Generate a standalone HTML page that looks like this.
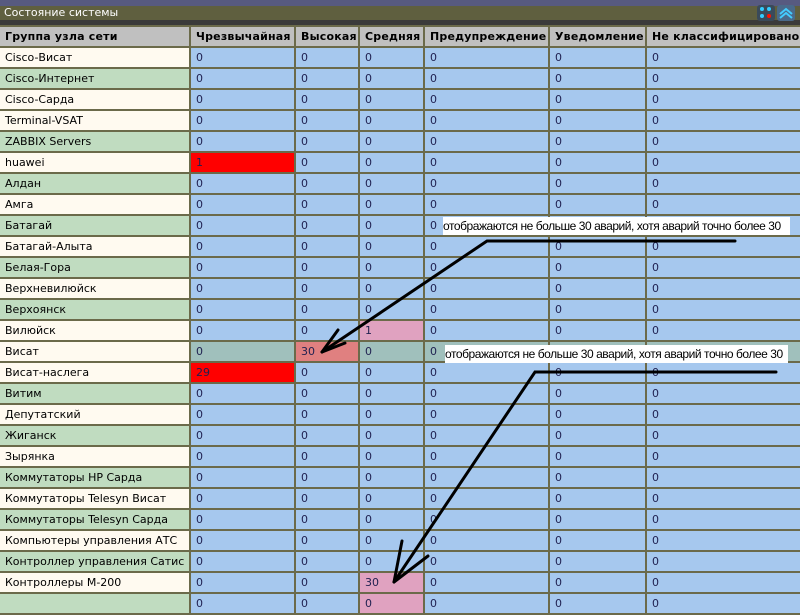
<!DOCTYPE html>
<html><head><meta charset="utf-8"><style>
*{margin:0;padding:0;box-sizing:border-box}
body{width:800px;height:600px;overflow:hidden;background:#fffaf0;font-family:"DejaVu Sans","Liberation Sans",sans-serif;font-size:11px;position:relative}
#top{position:absolute;left:0;top:0;width:800px;height:6px;background:#575a80}
#title{position:absolute;left:0;top:6px;width:800px;height:14px;background:#5f5f3f;color:#fff;font-size:11px;line-height:14px;padding-left:4px}
#strip{position:absolute;left:0;top:20px;width:800px;height:5px;background:#3a3a3a}
table{position:absolute;left:-2px;top:25px;border-collapse:collapse;table-layout:fixed;width:804px}
td,th{border:2px solid #6b6a4a;height:21px;padding:0 0 0 5px;text-align:left;white-space:nowrap;overflow:hidden}
th{background:#c0c0c0;font-weight:bold;color:#000;font-size:11px;letter-spacing:0.2px}
td{background:#a6c8ee;color:#1f2050}
td.l{color:#000}
td.c{background:#fffaf0}
td.g{background:#c0dcc0}
td.r{background:#ff0000}
td.p{background:#e0a2c0}
td.s{background:#a0c0bc}
td.h{background:#e08080}
.note{position:absolute;background:#fff;color:#000;font-family:"Liberation Sans",sans-serif;font-size:12px;line-height:18px;white-space:nowrap;overflow:hidden;letter-spacing:-0.45px}
.ic{position:absolute;top:5px;width:18px;height:16px;border-radius:3px;background:#3a4a5a}
</style></head><body>
<div id="top"></div>
<div id="title">Состояние системы</div>
<div id="strip"></div>
<div class="ic" style="left:757px"><div style="position:absolute;left:3px;top:2px;width:4px;height:4px;border-radius:2px;background:#3cf"></div><div style="position:absolute;left:10px;top:2px;width:4px;height:4px;border-radius:2px;background:#3cf"></div><div style="position:absolute;left:3px;top:9px;width:4px;height:4px;border-radius:2px;background:#3cf"></div><div style="position:absolute;left:10px;top:9px;width:4px;height:4px;border-radius:2px;background:#f10"></div></div>
<div class="ic" style="left:777px;background:#4a6a8a"><svg width="18" height="16"><path d="M3 9 L9 4 L15 9 M3 13 L9 8 L15 13" stroke="#4cf" stroke-width="2" fill="none"/></svg></div>
<table>
<colgroup><col style="width:191px"><col style="width:105px"><col style="width:64px"><col style="width:65px"><col style="width:125px"><col style="width:97px"><col style="width:157px"></colgroup>
<tr><th>Группа узла сети</th><th>Чрезвычайная</th><th>Высокая</th><th>Средняя</th><th>Предупреждение</th><th>Уведомление</th><th>Не классифицировано</th></tr>
<tr><td class="l c">Cisco-Висат</td><td>0</td><td>0</td><td>0</td><td>0</td><td>0</td><td>0</td></tr>
<tr><td class="l g">Cisco-Интернет</td><td>0</td><td>0</td><td>0</td><td>0</td><td>0</td><td>0</td></tr>
<tr><td class="l c">Cisco-Сарда</td><td>0</td><td>0</td><td>0</td><td>0</td><td>0</td><td>0</td></tr>
<tr><td class="l c">Terminal-VSAT</td><td>0</td><td>0</td><td>0</td><td>0</td><td>0</td><td>0</td></tr>
<tr><td class="l g">ZABBIX Servers</td><td>0</td><td>0</td><td>0</td><td>0</td><td>0</td><td>0</td></tr>
<tr><td class="l c">huawei</td><td class="r">1</td><td>0</td><td>0</td><td>0</td><td>0</td><td>0</td></tr>
<tr><td class="l g">Алдан</td><td>0</td><td>0</td><td>0</td><td>0</td><td>0</td><td>0</td></tr>
<tr><td class="l c">Амга</td><td>0</td><td>0</td><td>0</td><td>0</td><td>0</td><td>0</td></tr>
<tr><td class="l g">Батагай</td><td>0</td><td>0</td><td>0</td><td>0</td><td>0</td><td>0</td></tr>
<tr><td class="l c">Батагай-Алыта</td><td>0</td><td>0</td><td>0</td><td>0</td><td>0</td><td>0</td></tr>
<tr><td class="l g">Белая-Гора</td><td>0</td><td>0</td><td>0</td><td>0</td><td>0</td><td>0</td></tr>
<tr><td class="l c">Верхневилюйск</td><td>0</td><td>0</td><td>0</td><td>0</td><td>0</td><td>0</td></tr>
<tr><td class="l g">Верхоянск</td><td>0</td><td>0</td><td>0</td><td>0</td><td>0</td><td>0</td></tr>
<tr><td class="l c">Вилюйск</td><td>0</td><td>0</td><td class="p">1</td><td>0</td><td>0</td><td>0</td></tr>
<tr><td class="l c">Висат</td><td class="s">0</td><td class="h">30</td><td class="s">0</td><td class="s">0</td><td class="s">0</td><td class="s">0</td></tr>
<tr><td class="l c">Висат-наслега</td><td class="r">29</td><td>0</td><td>0</td><td>0</td><td>0</td><td>0</td></tr>
<tr><td class="l g">Витим</td><td>0</td><td>0</td><td>0</td><td>0</td><td>0</td><td>0</td></tr>
<tr><td class="l c">Депутатский</td><td>0</td><td>0</td><td>0</td><td>0</td><td>0</td><td>0</td></tr>
<tr><td class="l g">Жиганск</td><td>0</td><td>0</td><td>0</td><td>0</td><td>0</td><td>0</td></tr>
<tr><td class="l c">Зырянка</td><td>0</td><td>0</td><td>0</td><td>0</td><td>0</td><td>0</td></tr>
<tr><td class="l g">Коммутаторы HP Сарда</td><td>0</td><td>0</td><td>0</td><td>0</td><td>0</td><td>0</td></tr>
<tr><td class="l c">Коммутаторы Telesyn Висат</td><td>0</td><td>0</td><td>0</td><td>0</td><td>0</td><td>0</td></tr>
<tr><td class="l g">Коммутаторы Telesyn Сарда</td><td>0</td><td>0</td><td>0</td><td>0</td><td>0</td><td>0</td></tr>
<tr><td class="l c">Компьютеры управления АТС</td><td>0</td><td>0</td><td>0</td><td>0</td><td>0</td><td>0</td></tr>
<tr><td class="l g">Контроллер управления Сатис</td><td>0</td><td>0</td><td>0</td><td>0</td><td>0</td><td>0</td></tr>
<tr><td class="l c">Контроллеры М-200</td><td>0</td><td>0</td><td class="p">30</td><td>0</td><td>0</td><td>0</td></tr>
<tr><td class="l g">&nbsp;</td><td>0</td><td>0</td><td class="p">0</td><td>0</td><td>0</td><td>0</td></tr>
</table>
<div class="note" style="left:443px;top:217px;width:347px;height:18px">отображаются не больше 30 аварий, хотя аварий точно более 30</div>
<div class="note" style="left:445px;top:345px;width:343px;height:18px">отображаются не больше 30 аварий, хотя аварий точно более 30</div>
<svg style="position:absolute;left:0;top:0" width="800" height="600">
<g stroke="#000" stroke-width="3" fill="none" stroke-linecap="round">
<path d="M735 241 L487 241 L322 352"/>
<path d="M322 352 L338 330 M322 352 L345 343"/>
<path d="M776 372 L535 372 L394 582"/>
<path d="M394 582 L402 541 M394 582 L428 556"/>
</g></svg>
</body></html>
